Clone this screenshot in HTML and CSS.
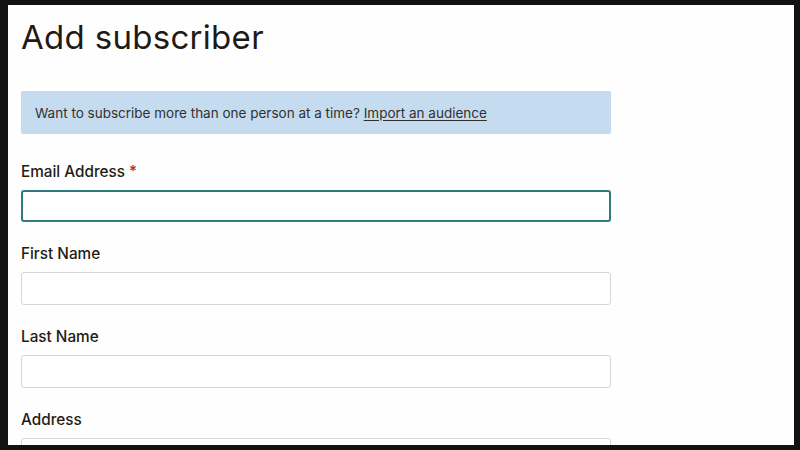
FILE: index.html
```html
<!DOCTYPE html>
<html lang="en">
<head>
<meta charset="utf-8">
<title>Add subscriber</title>
<link rel="stylesheet" href="styles.css">
</head>
<body>
<div class="page">
  <h1 class="title">Add subscriber</h1>
  <div class="notice">Want to subscribe more than one person at a time? <a class="notice-link" href="#">Import an audience</a></div>
  <form class="form">
    <div class="field">
      <label class="label" for="email">Email Address <span class="req">*</span></label>
      <input class="input input-focus" id="email" type="text">
    </div>
    <div class="field">
      <label class="label" for="fname">First Name</label>
      <input class="input" id="fname" type="text">
    </div>
    <div class="field">
      <label class="label" for="lname">Last Name</label>
      <input class="input" id="lname" type="text">
    </div>
    <div class="field">
      <label class="label" for="addr">Address</label>
      <input class="input" id="addr" type="text">
    </div>
  </form>
</div>
</body>
</html>
```
FILE: styles.css
```css
* { box-sizing: border-box; }
html, body { margin: 0; height: 100%; }
body {
  background: #121212;
  padding: 5px 6px 5px 8px;
  font-family: Inter, "Liberation Sans", sans-serif;
  color: #241c15;
  overflow: hidden;
}
.page {
  background: #fefefe;
  height: 440px;
  overflow: hidden;
  padding: 14px 13px 0;
}
.title {
  margin: 0;
  font-size: 33px;
  font-weight: 400;
  line-height: 36px;
  letter-spacing: 0.3px;
  color: #1f1a16;
}
.notice {
  margin-top: 36px;
  width: 590px;
  height: 43px;
  background: #c5dcf0;
  border-radius: 2px;
  padding: 0 14px;
  display: flex;
  align-items: center;
  font-size: 13.5px;
  color: #33302c;
  white-space: pre;
}
.notice-link { color: #33302c; text-decoration: underline; text-underline-offset: 2px; }
.form { display: flex; flex-direction: column; gap: 21px; margin-top: 27px; width: 590px; }
.field { display: flex; flex-direction: column; gap: 7px; }
.label { font-size: 15.3px; font-weight: 500; line-height: 22px; }
.req { color: #a3302a; }
.input {
  height: 33px;
  width: 100%;
  border: 1px solid #d6d5d3;
  border-radius: 3px;
  background: #fff;
  outline: none;
}
.input-focus { border: 2px solid #307b7f; height: 32px; }
```
